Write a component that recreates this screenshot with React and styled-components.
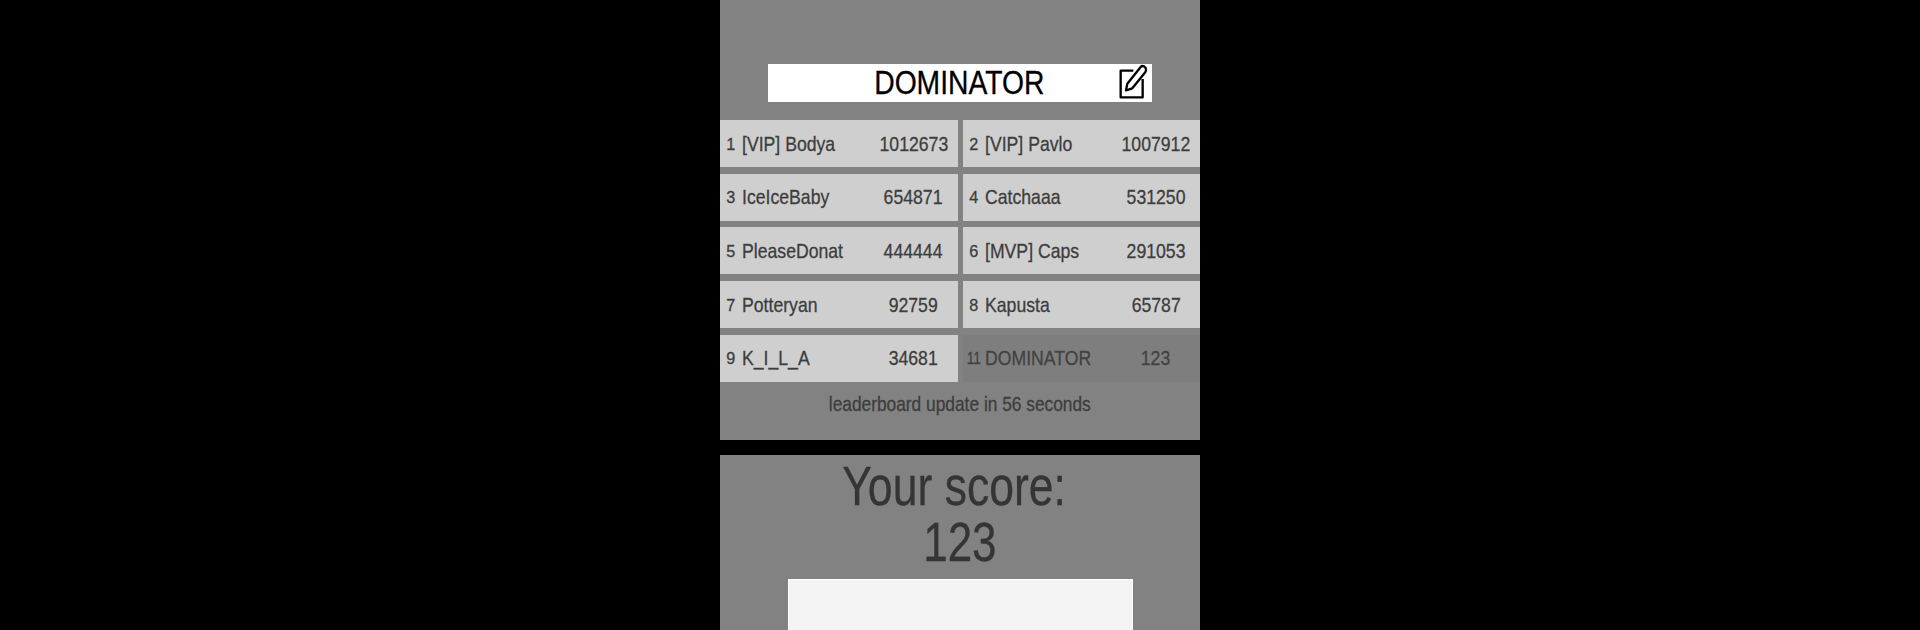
import styled, { createGlobalStyle } from 'styled-components'

const players = [
  { rank: 1, name: '[VIP] Bodya', score: 1012673 },
  { rank: 2, name: '[VIP] Pavlo', score: 1007912 },
  { rank: 3, name: 'IceIceBaby', score: 654871 },
  { rank: 4, name: 'Catchaaa', score: 531250 },
  { rank: 5, name: 'PleaseDonat', score: 444444 },
  { rank: 6, name: '[MVP] Caps', score: 291053 },
  { rank: 7, name: 'Potteryan', score: 92759 },
  { rank: 8, name: 'Kapusta', score: 65787 },
  { rank: 9, name: 'K_I_L_A', score: 34681 },
  { rank: 11, name: 'DOMINATOR', score: 123, own: true }
]

const EditIcon = () => (
  <IconSvg viewBox='84 40 90 110' aria-hidden='true'>
    <path d='M130 63H92V143H158V88' />
    <path d='M108 122L112 102L152 52C157 46 168 50 168 60C168 64 166 68 164 70L127 116Z' />
  </IconSvg>
)

const App = () => (
  <>
    <GlobalStyle />
    <Page>
      <Column>
        <LeaderPanel>
          <NameBar>
            <NameText>DOMINATOR</NameText>
            <EditIcon />
          </NameBar>
          <Board>
            {players.map(p => (
              <Row key={p.rank} $own={p.own}>
                <Rank><Squeeze $x={p.rank > 9 ? 0.8 : 0.95}>{p.rank}</Squeeze></Rank>
                <Name><Squeeze $origin='left'>{p.name}</Squeeze></Name>
                <Score><Squeeze>{p.score}</Squeeze></Score>
              </Row>
            ))}
          </Board>
          <UpdateNote><Squeeze $x={0.825}>leaderboard update in 56 seconds</Squeeze></UpdateNote>
        </LeaderPanel>
        <ScorePanel>
          <ScoreTitle><Squeeze $x={0.81}>Your score:</Squeeze></ScoreTitle>
          <ScoreValue><Squeeze $x={0.8}>123</Squeeze></ScoreValue>
          <AdBox />
        </ScorePanel>
      </Column>
    </Page>
  </>
)

export default App

const GlobalStyle = createGlobalStyle`
  html, body {
    margin: 0;
    height: 100%;
    background: #000;
    overflow: hidden;
  }
  body {
    font-family: "Liberation Sans", Arial, sans-serif;
  }
`

const Page = styled.div`
  display: flex;
  justify-content: center;
  width: 100vw;
  height: 100vh;
  background: #000;
`

const Column = styled.div`
  display: flex;
  flex-direction: column;
  width: 480px;
  gap: 15px;
`

const LeaderPanel = styled.div`
  display: flex;
  flex-direction: column;
  height: 440px;
  padding-top: 64px;
  box-sizing: border-box;
  background: #828282;
`

const NameBar = styled.div`
  position: relative;
  display: flex;
  align-items: center;
  justify-content: center;
  height: 38px;
  margin: 0 48px;
  background: #fff;
`

const NameText = styled.span`
  display: inline-block;
  margin-left: -2px;
  font-size: 33px;
  color: #000;
  transform: scaleX(.857);
  white-space: nowrap;
  -webkit-text-stroke: .3px #000;
`

const IconSvg = styled.svg`
  position: absolute;
  top: -1px;
  right: 4px;
  width: 30px;
  height: 36.67px;
  fill: none;
  stroke: #000;
  stroke-width: 7;
  stroke-linejoin: round;
`

const Board = styled.div`
  display: grid;
  grid-template-columns: 237.5px 237px;
  grid-auto-rows: 47px;
  gap: 6.7px 5.5px;
  margin-top: 18px;
`

const Row = styled.div`
  display: grid;
  grid-template-columns: 21px 1fr 88px;
  align-items: center;
  background: ${props => props.$own ? '#7e7e7e' : '#cfcfcf'};
  color: ${props => props.$own ? '#424242' : '#3d3d3d'};
`

const Squeeze = styled.span`
  display: inline-block;
  transform: scaleX(${props => props.$x || 0.84});
  transform-origin: ${props => props.$origin || 'center'};
  white-space: nowrap;
  -webkit-text-stroke: .3px currentColor;
`

const Rank = styled.div`
  padding-top: 2px;
  font-size: 17px;
  text-align: center;
`

const Name = styled.div`
  padding-left: 1px;
  font-size: 21px;
  white-space: nowrap;
`

const Score = styled.div`
  font-size: 21px;
  text-align: center;
`

const UpdateNote = styled.div`
  margin-top: 10px;
  font-size: 21px;
  line-height: 24px;
  text-align: center;
  color: #3d3d3d;
`

const ScorePanel = styled.div`
  display: flex;
  flex: 1;
  flex-direction: column;
  align-items: center;
  min-height: 0;
  overflow: hidden;
  background: #828282;
`

const ScoreTitle = styled.div`
  margin-top: 3px;
  padding-right: 12px;
  font-size: 55px;
  line-height: 56px;
  color: #353535;
`

const ScoreValue = styled.div`
  font-size: 55px;
  line-height: 56px;
  color: #353535;
`

const AdBox = styled.div`
  flex-shrink: 0;
  width: 345px;
  height: 60px;
  margin-top: 9px;
  box-sizing: border-box;
  border: 1px solid #fff;
  background: #f4f4f4;
`
